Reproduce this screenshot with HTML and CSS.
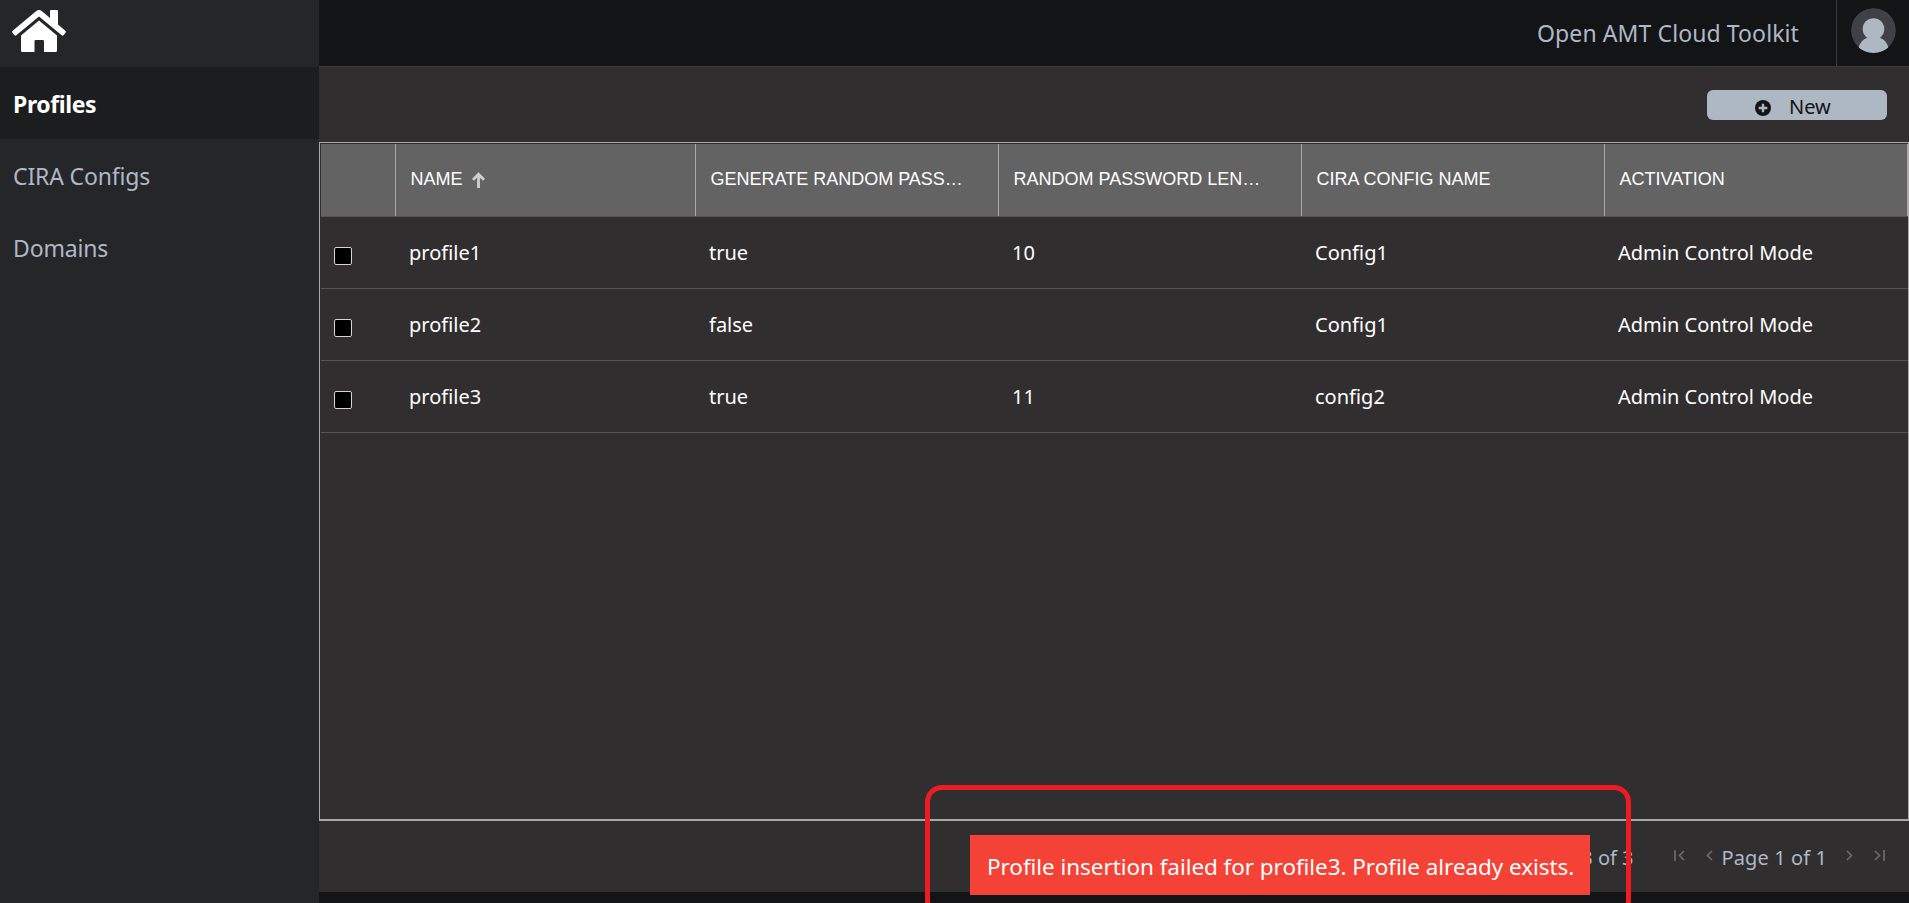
FILE: index.html
```html
<!DOCTYPE html>
<html lang="en">
<head>
<meta charset="utf-8">
<title>Open AMT Cloud Toolkit</title>
<link rel="stylesheet" href="styles.css">
</head>
<body>
<div class="app">
  <nav class="sidebar">
    <a class="home" aria-label="Home">
      <svg width="54" height="42" viewBox="0 0 54 42" fill="#fff"><path d="M27 10.500 45 25.600V40.500Q45 42 43.500 42H32V31.200Q32 30 30.800 30H23.700Q22.500 30 22.500 31.200V42H10.500Q9 42 9 40.500V25.600Z"/><path d="M24.300 1Q27 -1 29.700 1L38 8V1Q38 0 39 0H45Q46 0 46 1V14.600L53.300 20.800Q54.300 21.700 53.500 22.700L51.500 25.200Q50.600 26 49.700 25.300L27 6.500 4.300 25.300Q3.400 26 2.500 25.200L.5 22.700Q-.3 21.700.7 20.800Z"/></svg>
    </a>
    <a class="nav-item active">Profiles</a>
    <a class="nav-item">CIRA Configs</a>
    <a class="nav-item">Domains</a>
  </nav>
  <main class="main">
    <header class="topbar">
      <span class="brand">Open AMT Cloud Toolkit</span>
      <span class="user">
        <svg width="45" height="45" viewBox="0 0 45 45"><defs><clipPath id="disc"><circle cx="22.500" cy="22.500" r="22.500"/></clipPath></defs><g clip-path="url(#disc)"><circle cx="22.500" cy="22.500" r="22.500" fill="#3f4147"/><g fill="#aeb8c3"><circle cx="22.500" cy="21" r="10.800"/><path d="M17 29.500h11c5 1.500 8 5 9.500 10.500V45H7.500V40c1.500-5.500 4.500-9 9.500-10.500Z"/></g></g></svg>
      </span>
    </header>
    <div class="toolbar">
      <button class="new-btn">
        <svg width="16" height="16" viewBox="0 0 16 16"><circle cx="8" cy="8" r="8" fill="#131415"/><path d="M8 3.700v8.600M3.700 8h8.600" stroke="#aeb8c3" stroke-width="2.400"/></svg>
        <span>New</span>
      </button>
    </div>
    <section class="grid">
      <div class="row head">
        <div class="cell"></div>
        <div class="cell">NAME
          <svg width="13" height="16" viewBox="0 0 13 16" fill="none" stroke="#d0d0d0" stroke-width="2.800"><path d="M6.500 16V2M1 7.800 6.500 2.200 12 7.800"/></svg>
        </div>
        <div class="cell">GENERATE RANDOM PASS…</div>
        <div class="cell">RANDOM PASSWORD LEN…</div>
        <div class="cell">CIRA CONFIG NAME</div>
        <div class="cell">ACTIVATION</div>
      </div>
      <div class="row"><div class="cell"><i class="check"></i></div><div class="cell">profile1</div><div class="cell">true</div><div class="cell">10</div><div class="cell">Config1</div><div class="cell">Admin Control Mode</div></div>
      <div class="row"><div class="cell"><i class="check"></i></div><div class="cell">profile2</div><div class="cell">false</div><div class="cell"></div><div class="cell">Config1</div><div class="cell">Admin Control Mode</div></div>
      <div class="row"><div class="cell"><i class="check"></i></div><div class="cell">profile3</div><div class="cell">true</div><div class="cell">11</div><div class="cell">config2</div><div class="cell">Admin Control Mode</div></div>
    </section>
    <footer class="pager">
      <span class="range">3 of 3</span>
      <svg class="first" width="11" height="11" viewBox="0 0 11 11"><path d="M1 0v11M10 1 5.500 5.500 10 10"/></svg>
      <svg class="prev" width="7" height="11" viewBox="0 0 7 11"><path d="M6 1 1.500 5.500 6 10"/></svg>
      <span class="page">Page 1 of 1</span>
      <svg class="next" width="7" height="11" viewBox="0 0 7 11"><path d="M1 1 5.500 5.500 1 10"/></svg>
      <svg class="last" width="11" height="11" viewBox="0 0 11 11"><path d="M10 0v11M1 1 5.500 5.500 1 10"/></svg>
    </footer>
  </main>
  <div class="toast">Profile insertion failed for profile3. Profile already exists.</div>
  <div class="highlight"></div>
</div>
</body>
</html>
```
FILE: styles.css
```css
* { box-sizing: border-box; }
body { margin: 0; background: #131415; font-family: "Noto Sans", sans-serif; }
.app { position: relative; display: flex; width: 1909px; height: 903px; overflow: hidden; }
.sidebar { width: 319px; background: #252628; display: flex; flex-direction: column; }
.home { height: 67px; padding: 10px 12px; }
.home svg { display: block; }
.nav-item { height: 72px; padding: 0 0 0 13px; line-height: 75px; font-size: 23px; letter-spacing: -0.15px; color: #aeb8c8; white-space: nowrap; }
.nav-item.active { background: #1c1d1f; color: #fff; font-weight: 700; letter-spacing: -0.4px; }
.main { flex: 1; display: flex; flex-direction: column; }
.topbar { height: 67px; background: #131415; border-bottom: 1px solid #3a3b3e; display: flex; justify-content: flex-end; }
.brand { width: 299px; font-size: 23px; letter-spacing: 0.1px; line-height: 66px; color: #aeb8c8; white-space: nowrap; }
.user { width: 73px; border-left: 1px solid #3a3b3e; padding: 8px 0 0 14px; }
.user svg { display: block; }
.toolbar { height: 75px; background: #312e2f; display: flex; justify-content: flex-end; padding: 23px 22px 0 0; }
.new-btn { width: 180px; height: 30px; border: 0; border-radius: 6px; background: #aeb8c3; color: #131415; padding: 0 0 0 48px; display: flex; align-items: center; gap: 18px; font: 20px/30px "Noto Sans", sans-serif; }
.new-btn svg { margin-top: 5px; }
.new-btn span { padding-top: 3px; }
.grid { height: 679px; background: #312e2f; border: 1px solid #a9a7a7; border-bottom-width: 2px; padding: 1px 0 0 1px; }
.row { display: grid; grid-template-columns: 75px 300px repeat(4, 303px); height: 72px; border-bottom: 1px solid #565454; }
.cell { padding-left: 13px; line-height: 71px; font-size: 20px; color: #fff; white-space: nowrap; overflow: hidden; }
.head { height: 73px; background: #636363; }
.head .cell { border-right: 1px solid #a9a7a7; padding-left: 14.5px; font: 18px/70px "Liberation Sans", Arial, sans-serif; }
.head svg { margin-left: 4px; vertical-align: -3px; }
.check { display: block; width: 18px; height: 18px; margin-top: 30px; border: 1.5px solid #d4d4d4; border-radius: 2px; background: #000; }
.pager { height: 71px; background: #312e2f; display: flex; align-items: center; justify-content: flex-end; padding: 0 24px 2px 0; font-size: 20px; color: #aeb8c8; white-space: nowrap; }
.pager span { padding-top: 4px; }
.pager path { fill: none; stroke: #6b6b6c; stroke-width: 1.7; }
.page { letter-spacing: 0.1px; }
.first { margin-left: 40px; }
.prev { margin: 0 9px 0 21px; }
.next { margin-left: 19px; }
.last { margin-left: 21px; }
.toast { position: absolute; left: 970px; top: 835px; width: 620px; height: 60px; background: #f44336; color: #fff; font-size: 22.5px; letter-spacing: -0.06px; line-height: 63px; padding-left: 17px; white-space: nowrap; }
.highlight { position: absolute; left: 925px; top: 785px; width: 706px; height: 132px; border: 5px solid #ed1c24; border-radius: 17px; }
```
